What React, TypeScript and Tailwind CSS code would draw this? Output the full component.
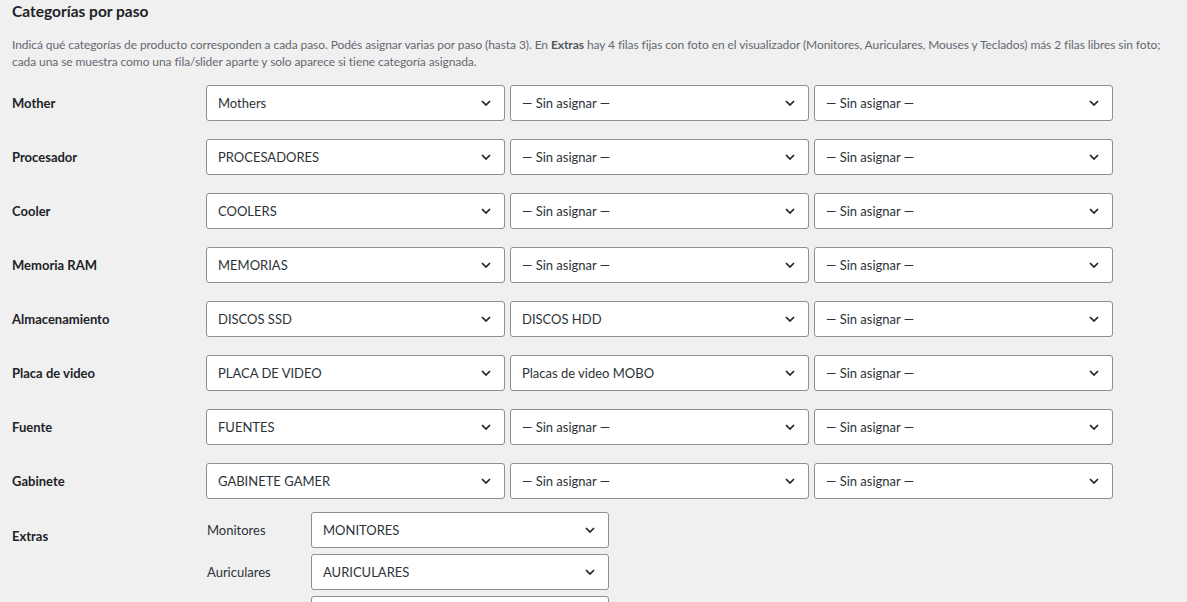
import React from "react";

const font = { fontFamily: 'Lato, "Liberation Sans", Arial, sans-serif' };

function Chevron() {
  return (
    <svg width="10" height="6" viewBox="0 0 10 6" className="shrink-0">
      <path d="M1 1 L5 5 L9 1" fill="none" stroke="#1d2327" strokeWidth="1.7" />
    </svg>
  );
}

function Select({ value, w = "w-[299px]" }: { value: string; w?: string }) {
  return (
    <div
      className={`${w} h-[36px] bg-white border border-[#8c8f94] rounded-[3px] flex items-center justify-between pl-[11px] pr-[13px] text-[13px] leading-[20px] text-[#2c3338]`}
    >
      <span>{value}</span>
      <Chevron />
    </div>
  );
}

const SA = "— Sin asignar —";

const rows: [string, string, string, string][] = [
  ["Mother", "Mothers", SA, SA],
  ["Procesador", "PROCESADORES", SA, SA],
  ["Cooler", "COOLERS", SA, SA],
  ["Memoria RAM", "MEMORIAS", SA, SA],
  ["Almacenamiento", "DISCOS SSD", "DISCOS HDD", SA],
  ["Placa de video", "PLACA DE VIDEO", "Placas de video MOBO", SA],
  ["Fuente", "FUENTES", SA, SA],
  ["Gabinete", "GABINETE GAMER", SA, SA],
];

const extras: [string, string][] = [
  ["Monitores", "MONITORES"],
  ["Auriculares", "AURICULARES"],
  ["Mouses", "MOUSES"],
  ["Teclados", "TECLADOS"],
];

export default function App() {
  return (
    <div className="w-[1187px] h-[602px] overflow-hidden bg-[#f0f0f1] text-[#1d2327]" style={font}>
      <div className="pl-[12px] pt-[1px]">
        <h2 className="text-[15.5px] font-bold leading-[20px] m-0">Categorías por paso</h2>
        <p className="mt-[15px] text-[12px] leading-[17px] text-[#646970] tracking-[-0.08px] whitespace-nowrap">
          Indicá qué categorías de producto corresponden a cada paso. Podés asignar varias por paso (hasta 3). En{" "}
          <strong className="font-bold text-[#50575e]">Extras</strong> hay 4 filas fijas con foto en el visualizador
          (Monitores, Auriculares, Mouses y Teclados) más 2 filas libres sin foto;
          <br />
          cada una se muestra como una fila/slider aparte y solo aparece si tiene categoría asignada.
        </p>
        <div className="mt-[15px] flex flex-col gap-[18px]">
          {rows.map(([label, a, b, c]) => (
            <div key={label} className="flex items-center">
              <div className="w-[194px] text-[13px] leading-[20px] font-bold text-[#1d2327]">{label}</div>
              <div className="flex gap-[5px]">
                <Select value={a} />
                <Select value={b} />
                <Select value={c} />
              </div>
            </div>
          ))}
        </div>
        <div className="mt-[13px] flex items-start">
          <div className="w-[195px] mt-[14px] text-[13px] leading-[20px] font-bold text-[#1d2327]">Extras</div>
          <div className="flex flex-col gap-[6px]">
            {extras.map(([l, v]) => (
              <div key={l} className="flex items-center">
                <div className="w-[104px] text-[13px] leading-[20px] text-[#2c3338]">{l}</div>
                <Select value={v} w="w-[298px]" />
              </div>
            ))}
          </div>
        </div>
      </div>
    </div>
  );
}
